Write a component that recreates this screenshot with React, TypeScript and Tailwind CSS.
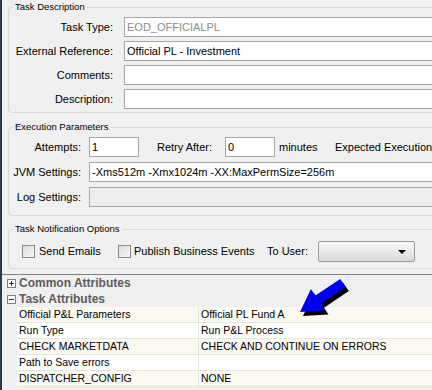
import React from "react";

const rows = [
  { name: "Official P&L Parameters", value: "Official PL Fund A" },
  { name: "Run Type", value: "Run P&L Process" },
  { name: "CHECK MARKETDATA", value: "CHECK AND CONTINUE ON ERRORS" },
  { name: "Path to Save errors", value: "" },
  { name: "DISPATCHER_CONFIG", value: "NONE" },
];

function Field({ value, muted, disabled }: { value?: string; muted?: boolean; disabled?: boolean }) {
  return (
    <div
      className={
        "h-[20px] border border-[#a7a7a7] px-[2px] leading-[18px] whitespace-nowrap overflow-hidden " +
        (disabled ? "bg-[#ededed]" : "bg-white") +
        (muted ? " text-[#8c8c8c]" : "")
      }
    >
      {value}
    </div>
  );
}

function Checkbox() {
  return (
    <div className="w-[13px] h-[13px] border border-[#8a8a8a] bg-gradient-to-br from-[#dcdcdc] to-[#f8f8f8] shrink-0" />
  );
}

function TreeBox({ open }: { open: boolean }) {
  return (
    <div className="relative w-[9px] h-[9px] border border-[#808080] bg-white shrink-0">
      <div className="absolute left-[1px] top-[3px] w-[5px] h-[1px] bg-[#333]" />
      {!open && <div className="absolute left-[3px] top-[1px] w-[1px] h-[5px] bg-[#333]" />}
    </div>
  );
}

function Legend({ children }: { children: React.ReactNode }) {
  return <legend className="ml-[4px] px-[2px] leading-[12px] text-[9.5px]">{children}</legend>;
}

export default function App() {
  return (
    <div className="relative w-[432px] h-[390px] overflow-hidden bg-[#f0f0f0] flex font-['Liberation_Sans',Arial,sans-serif] text-[11px] text-black">
      <div className="w-[2px] shrink-0 bg-[#2b3a57]" />
      <div className="flex-1 flex flex-col min-w-0">
        <div className="pl-[6px] pt-[1px]">
          <fieldset className="w-[440px] border border-[#d3dbe2] rounded-[4px]">
            <Legend>Task Description</Legend>
            <div className="grid grid-cols-[104px_1fr] gap-x-[11px] gap-y-[4px] pt-[4px] pb-[3px] items-center">
              <div className="text-right">Task Type:</div>
              <Field value="EOD_OFFICIALPL" muted />
              <div className="text-right">External Reference:</div>
              <Field value="Official PL - Investment" />
              <div className="text-right">Comments:</div>
              <Field />
              <div className="text-right">Description:</div>
              <Field />
            </div>
          </fieldset>

          <fieldset className="mt-[8px] w-[440px] border border-[#d3dbe2] rounded-[4px]">
            <Legend>Execution Parameters</Legend>
            <div className="grid grid-cols-[72px_1fr] gap-x-[8px] gap-y-[5px] pt-[4px] pb-[8px] items-center">
              <div className="text-right">Attempts:</div>
              <div className="flex items-center whitespace-nowrap">
                <div className="w-[50px]">
                  <Field value="1" />
                </div>
                <div className="w-[73px] text-right">Retry After:</div>
                <div className="ml-[13px] w-[50px]">
                  <Field value="0" />
                </div>
                <div className="ml-[4px] w-[56px]">minutes</div>
                <div>Expected Execution</div>
              </div>
              <div className="text-right">JVM Settings:</div>
              <Field value="-Xms512m -Xmx1024m -XX:MaxPermSize=256m" />
              <div className="text-right">Log Settings:</div>
              <Field disabled />
            </div>
          </fieldset>

          <fieldset className="mt-[7px] w-[440px] border border-[#d3dbe2] rounded-[4px]">
            <Legend>Task Notification Options</Legend>
            <div className="flex items-center h-[21px] mt-[6px] mb-[6px] pl-[13px] whitespace-nowrap">
              <div className="w-[96px] flex items-center gap-[4px]">
                <Checkbox />
                <span>Send Emails</span>
              </div>
              <div className="w-[149px] flex items-center gap-[3px]">
                <Checkbox />
                <span>Publish Business Events</span>
              </div>
              <div className="w-[51px]">To User:</div>
              <div className="relative w-[97px] h-[21px] border border-[#9a9a9a] rounded-[2px] bg-gradient-to-b from-[#fafafa] to-[#d9d9d9]">
                <div className="absolute right-[8px] top-[8px] w-0 h-0 border-l-[4px] border-r-[4px] border-t-[4px] border-l-transparent border-r-transparent border-t-black" />
              </div>
            </div>
          </fieldset>
        </div>

        <div className="mt-[5px] border-t border-[#808080]">
          <div className="h-[16px] flex items-center pl-[5px] gap-[3px]">
            <TreeBox open={false} />
            <span className="text-[12px] font-bold text-[#5c5c5c]">Common Attributes</span>
          </div>
          <div className="h-[16px] flex items-center pl-[5px] gap-[3px]">
            <TreeBox open={true} />
            <span className="text-[12px] font-bold text-[#5c5c5c]">Task Attributes</span>
          </div>
          <div className="ml-[15px]">
            {rows.map((r, i) => (
              <div
                key={r.name}
                className={
                  "h-[16px] flex border-b border-[#e6e6e0] leading-[15px] text-[10.5px] " +
                  (i % 2 === 0 ? "bg-[#fcfaf0]" : "bg-white")
                }
              >
                <div className="w-[182px] pl-[2px] border-r border-[#e6e6e0]">{r.name}</div>
                <div className="pl-[2px] whitespace-nowrap">{r.value}</div>
              </div>
            ))}
          </div>
        </div>
      </div>

      <svg className="absolute left-0 top-0 pointer-events-none" width="432" height="390">
        <polygon
          transform="translate(3 4)"
          points="340.2,278.9 315.4,295.6 310.9,288.9 300,312 325.5,310.5 321,303.8 345.8,287.1"
          fill="#000"
        />
        <polygon
          points="340.2,278.9 315.4,295.6 310.9,288.9 300,312 325.5,310.5 321,303.8 345.8,287.1"
          fill="#0000f0"
        />
      </svg>
    </div>
  );
}
